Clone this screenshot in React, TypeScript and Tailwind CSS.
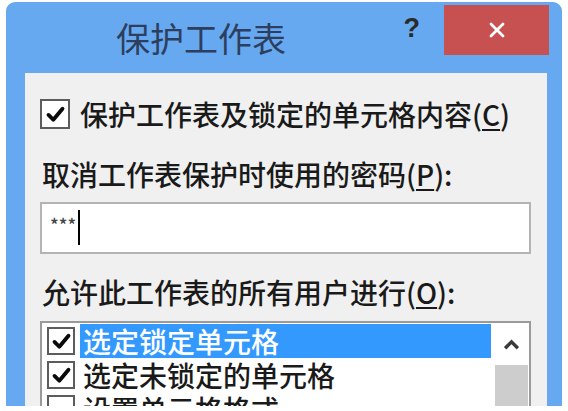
import React from "react"

const font = { fontFamily: '"Noto Sans CJK SC", "Noto Sans", sans-serif' }

function CheckBox({ size = 30 }: { size?: number }) {
  return (
    <div
      className="shrink-0 border-2 border-[#5c5c5c] bg-white flex items-center justify-center"
      style={{ width: size, height: size }}
    >
      <svg viewBox="0 0 24 24" className="w-[21px] h-[21px]">
        <path d="M4 12.5 L9.5 18 L20 5.5" fill="none" stroke="#0a0a0a" strokeWidth="4.4" strokeLinecap="round" strokeLinejoin="round" />
      </svg>
    </div>
  )
}

const options = [
  { label: "选定锁定单元格", checked: true, active: true },
  { label: "选定未锁定的单元格", checked: true, active: false },
  { label: "设置单元格格式", checked: false, active: false },
]

export default function App() {
  return (
    <div className="w-[568px] h-[411px] bg-white overflow-hidden pl-[6px] pt-[2px]" style={font}>
      <div className="w-[556px] h-[404px] rounded-t-[9px] bg-[#66a9f0] flex flex-col">
        {/* title bar */}
        <div className="h-[71px] flex items-start shrink-0">
          <span className="ml-[110px] mt-[16px] text-[34px] leading-[40px] text-[#2d3e5e]">保护工作表</span>
          <div className="flex-1" />
          <span className="mt-[10px] mr-[24px] text-[27px] leading-[32px] font-bold text-[#2a2a2a]" style={{ fontFamily: '"Liberation Sans", sans-serif' }}>?</span>
          <button className="mt-[3px] mr-[13px] w-[105px] h-[50px] bg-[#c75050] flex items-center justify-center">
            <svg viewBox="0 0 16 16" className="w-[16px] h-[16px]">
              <path d="M2 2 L14 14 M14 2 L2 14" stroke="#fff" strokeWidth="2.8" strokeLinecap="round" />
            </svg>
          </button>
        </div>

        {/* body */}
        <div className="flex-1 ml-[19px] mr-[15px] bg-[#f0f0f0] pl-[15px] pr-[16px] flex flex-col overflow-hidden text-[#1a1a1a] font-medium">
          <div className="mt-[26px] h-[30px] flex items-center gap-[10px]">
            <CheckBox />
            <span className="text-[28px] leading-[30px]">
              保护工作表及锁定的单元格内容(<span className="underline underline-offset-[3px]">C</span>)
            </span>
          </div>

          <div className="mt-[27px] pl-[2px] text-[28px] leading-[36px]">
            取消工作表保护时使用的密码(<span className="underline underline-offset-[3px]">P</span>):
          </div>

          <div className="mt-[10px] h-[52px] shrink-0 border-2 border-[#b4b4b4] bg-white flex items-start pl-[8px] pt-[6px]">
            <span className="text-[18px] leading-[24px] text-[#444] mt-[2px]">***</span>
            <div className="ml-[2px] w-[2px] h-[35px] bg-black" />
          </div>

          <div className="mt-[20px] pl-[2px] text-[28px] leading-[36px]">
            允许此工作表的所有用户进行(<span className="underline underline-offset-[3px]">O</span>):
          </div>

          <div className="mt-[11px] flex-1 border-2 border-[#9a9a9a] border-b-0 bg-white flex pt-[1px] pl-[5px]">
            <div className="flex-1 flex flex-col">
              {options.map((o) => (
                <div key={o.label} className="h-[34px] flex items-center shrink-0">
                  {o.checked ? (
                    <CheckBox size={28} />
                  ) : (
                    <div className="w-[28px] h-[28px] shrink-0 border-2 border-[#5c5c5c] bg-white" />
                  )}
                  <div
                    className={
                      o.active
                        ? "ml-[5px] flex-1 h-[34px] bg-[#3399ff] text-white pl-[3px] text-[28px] leading-[34px]"
                        : "ml-[5px] flex-1 h-[34px] pl-[3px] text-[28px] leading-[34px]"
                    }
                  >
                    {o.label}
                  </div>
                </div>
              ))}
            </div>
            <div className="w-[36px] ml-[2px] flex flex-col items-center">
              <div className="h-[41px] w-full flex items-center justify-center">
                <svg viewBox="0 0 16 10" className="w-[17px] h-[11px]">
                  <path d="M2 8.5 L8 2.5 L14 8.5" fill="none" stroke="#3a3a3a" strokeWidth="3.2" />
                </svg>
              </div>
              <div className="flex-1 w-[33px] bg-[#cdcdcd]" />
            </div>
          </div>
        </div>
      </div>
    </div>
  )
}
